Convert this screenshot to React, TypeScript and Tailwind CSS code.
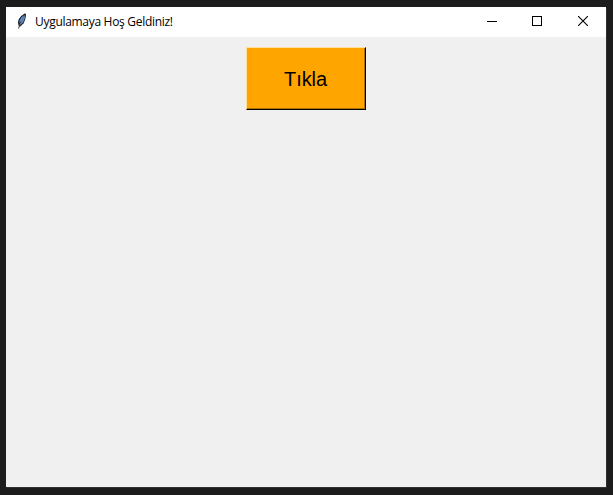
import React from "react";

function FeatherIcon() {
  return (
    <svg width="12" height="17" viewBox="0 0 12 17" className="block">
      <path d="M8.6 0.5 L9.8 0.7 L10 2.5 L9.2 6.5 L7.6 10.3 L5.4 12.6 L3.6 14 L2.4 12 L2 9 L2.8 6 L5.2 3 Z" fill="#18202c" />
      <path d="M8.2 2 L5.4 4.4 L3.6 7.6 L3.4 10.2 L6 6.5 Z" fill="#5b97e0" />
      <path d="M9 2.6 L8.6 6 L6.8 9.5 L4.8 11.5 L5.6 8.4 Z" fill="#5b97e0" />
      <path d="M8.6 2.4 L6 7 L3.8 12.4" fill="none" stroke="#8d949d" strokeWidth="0.8" />
      <path d="M3.4 12.5 L2.6 15.6" fill="none" stroke="#444444" strokeWidth="1" />
    </svg>
  );
}

function WindowControls() {
  return (
    <div className="ml-auto flex h-full pt-[9px] text-black">
      <div className="w-[45px] pl-[17px]">
        <svg width="10" height="10" shapeRendering="crispEdges" className="block">
          <path d="M0 5.5H10" stroke="currentColor" />
        </svg>
      </div>
      <div className="w-[45px] pl-[17px]">
        <svg width="10" height="10" shapeRendering="crispEdges" className="block">
          <rect x="0.5" y="0.5" width="9" height="9" fill="none" stroke="currentColor" />
        </svg>
      </div>
      <div className="w-[46px] pl-[18px]">
        <svg width="10" height="10" className="block">
          <path d="M0 0L10 10M10 0L0 10" stroke="currentColor" strokeWidth="1.1" />
        </svg>
      </div>
    </div>
  );
}

export default function App() {
  return (
    <div className="h-[495px] w-[613px] overflow-hidden bg-[#1c1c1c] pt-[7px] pl-[6px]">
      <div className="flex h-[480px] w-[600px] flex-col bg-[#f0f0f0] shadow-[1px_1px_0_#303030]">
        <div className="flex h-[30px] shrink-0 items-center bg-white">
          <div className="mb-[2px] ml-[10px] w-[12px]">
            <FeatherIcon />
          </div>
          <span className="ml-[7px] font-['Open_Sans','Noto_Sans',sans-serif] text-[12px] leading-[30px] tracking-[-0.3px] whitespace-nowrap text-black">
            Uygulamaya Hoş Geldiniz!
          </span>
          <WindowControls />
        </div>
        <button className="mt-[10px] h-[63px] w-[120px] self-center border border-t-[#ffe0a0] border-r-black border-b-black border-l-[#ffe0a0] bg-[#ffa500] pt-[2px] pr-[1px] shadow-[inset_-1px_-1px_0_#ad7000] font-['Liberation_Sans',Arial,sans-serif] text-[20px] leading-[59px] tracking-[-0.1px] text-black">
          Tıkla
        </button>
      </div>
    </div>
  );
}
